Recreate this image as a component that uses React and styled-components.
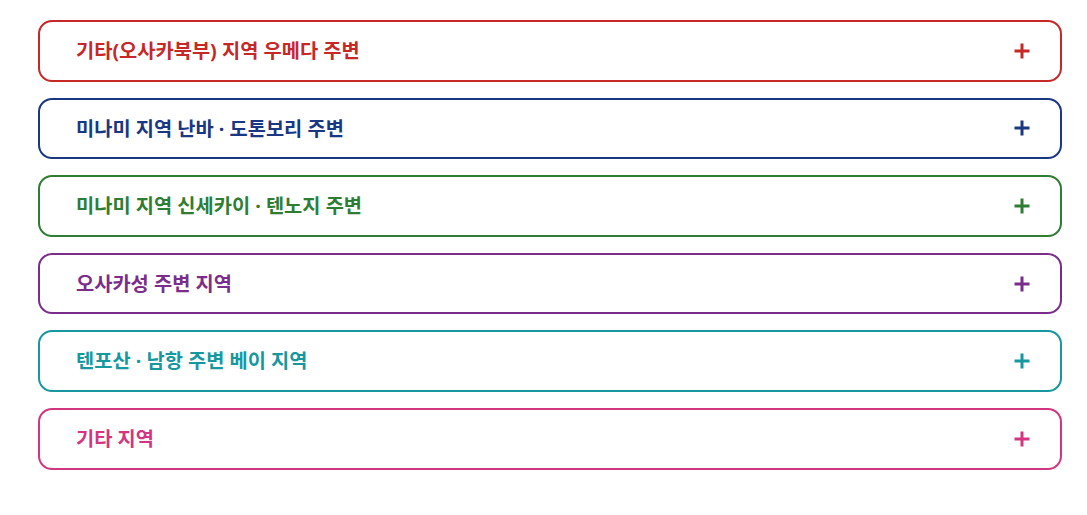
import React from "react";
import styled, { createGlobalStyle } from "styled-components";

const Global = createGlobalStyle`
  html, body { margin: 0; padding: 0; background: #ffffff; }
  body { font-family: "Noto Sans", "Noto Sans CJK KR", sans-serif; }
`;

const Page = styled.div`
  padding: 20px 25px 20px 38px;
`;

const List = styled.div`
  display: flex;
  flex-direction: column;
  gap: 16px;
`;

const Item = styled.button`
  display: flex;
  align-items: center;
  justify-content: space-between;
  width: 100%;
  box-sizing: border-box;
  padding: 18px 30px 18px 36px;
  background: #ffffff;
  border: 2px solid ${(p) => p.$color};
  border-radius: 14px;
  color: ${(p) => p.$color};
  font-family: "Noto Sans", "Noto Sans CJK KR", sans-serif;
  font-size: 19.8px;
  font-weight: 700;
  line-height: 21.6px;
  text-align: left;
  cursor: pointer;
`;

const Label = styled.span`
  display: block;
`;

const PlusIcon = styled.svg`
  width: 16px;
  height: 16px;
  flex: none;
`;

const regions = [
  { label: "기타(오사카북부) 지역 우메다 주변", color: "#c62828" },
  { label: "미나미 지역 난바 · 도톤보리 주변", color: "#1a3782" },
  { label: "미나미 지역 신세카이 · 텐노지 주변", color: "#2e7d32" },
  { label: "오사카성 주변 지역", color: "#7b2d8b" },
  { label: "텐포산 · 남항 주변 베이 지역", color: "#17989f" },
  { label: "기타 지역", color: "#d23680" },
];

export default function App() {
  return (
    <>
      <Global />
      <Page>
        <List>
          {regions.map((r) => (
            <Item key={r.label} $color={r.color} type="button">
              <Label>{r.label}</Label>
              <PlusIcon viewBox="0 0 16 16" aria-hidden="true">
                <path d="M8 0.5V15.5M0.5 8H15.5" stroke={r.color} strokeWidth="3" fill="none" />
              </PlusIcon>
            </Item>
          ))}
        </List>
      </Page>
    </>
  );
}
